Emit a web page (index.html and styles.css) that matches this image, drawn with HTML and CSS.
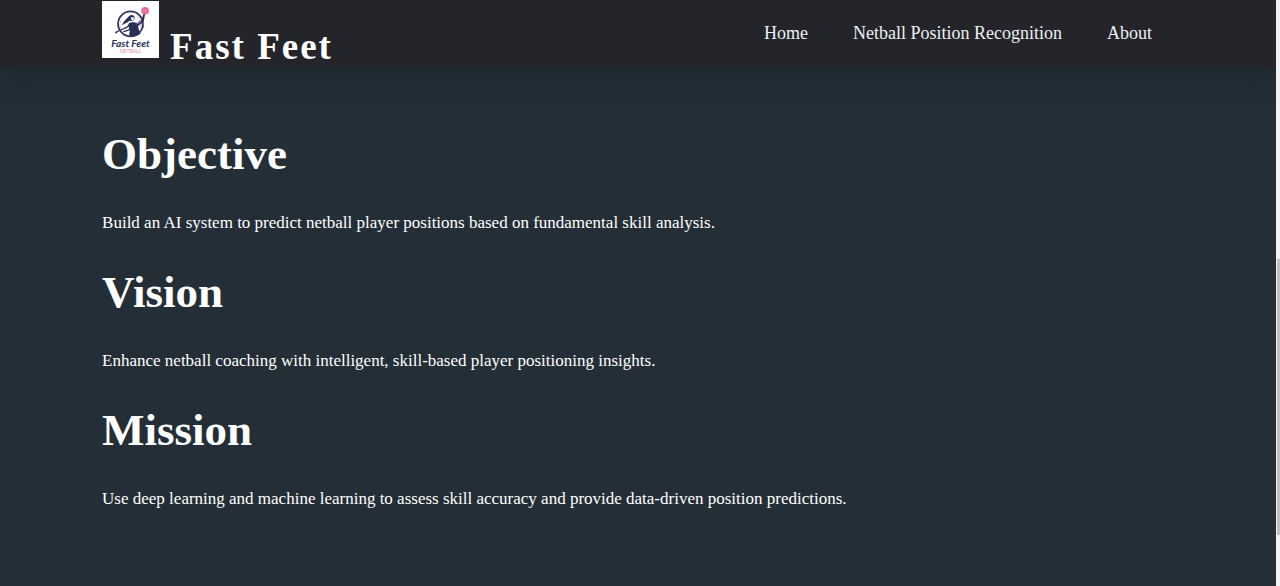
FILE: index.html
```html
<!DOCTYPE html>
<html lang="en">
<head>
<meta charset="utf-8">
<meta name="viewport" content="width=device-width, initial-scale=1">
<title>Fast Feet</title>
<link rel="stylesheet" href="styles.css">
</head>
<body>
<div class="page">
  <header class="header">
    <div class="brand">
      <svg class="brand-logo" viewBox="0 0 56 56" role="img" aria-label="Fast Feet Netball">
        <rect width="56" height="56" fill="#fff"/>
        <circle cx="28" cy="22.500" r="12.200" fill="#fff" stroke="#303460" stroke-width="1.700"/>
        <path d="M18.500 19a10.300 10.300 0 0 0 2 11M34 14.500a10.300 10.300 0 0 1 3.500 12" fill="none" stroke="#e9a9bf" stroke-width=".8"/>
        <path d="M26 15.500c2-2.500 5.500-2 6 .5.300 2-1 3.600-2.500 4l-2.500-.8c-1.500 2.300-4.500 2.800-7.500 4.800 1-3.500 4-6 6.500-8.500z" fill="#27305a"/>
        <path d="M26.500 21.500l4-.8 3.500.8 5-3.200 1.800-6 1.500.5-1.200 7-5.600 4.700c0 3 1.500 5 2.500 7.500-3.500 3-8 3.500-11.500 2l1-5.500c-1.500-2-2-4.500-1-7z" fill="#27305a"/>
        <path d="M27 22.500c-1 2.500-3.500 4-6.500 5l-6.500 3M21 30c2.500-.5 5-1 7.500-2.500" fill="none" stroke="#27305a" stroke-width="1.200"/>
        <path d="M28.500 16.500l2.300-.3.300 2-1.500 1zM34 22.500l4.500-2.500" fill="#fff" stroke="#fff" stroke-width=".6"/>
        <circle cx="14" cy="31" r="1" fill="#27305a"/>
        <path d="M39 22l2 4" stroke="#27305a" stroke-width=".8"/>
        <circle cx="42.300" cy="9.500" r="3.700" fill="#e5678f"/>
        <path d="M39.500 8l5.500 3M40.500 12l3.500-5.500" stroke="#f2a3ba" stroke-width=".5"/>
        <text class="logo-name" x="28" y="45" text-anchor="middle">Fast Feet</text>
        <text class="logo-sport" x="28" y="51" text-anchor="middle">NETBALL</text>
      </svg>
      <span class="brand-name">Fast Feet</span>
    </div>
    <nav class="nav">
      <a href="#home">Home</a>
      <a href="#recognition">Netball Position Recognition</a>
      <a href="#about">About</a>
    </nav>
  </header>
  <main class="content">
    <section class="topic">
      <h1>Objective</h1>
      <p>Build an AI system to predict netball player positions based on fundamental skill analysis.</p>
    </section>
    <section class="topic">
      <h1>Vision</h1>
      <p>Enhance netball coaching with intelligent, skill-based player positioning insights.</p>
    </section>
    <section class="topic">
      <h1>Mission</h1>
      <p>Use deep learning and machine learning to assess skill accuracy and provide data-driven position predictions.</p>
    </section>
  </main>
</div>
<div class="scrollbar" aria-hidden="true">
  <div class="scrollbar-thumb"></div>
</div>
</body>
</html>
```
FILE: styles.css
```css
* {
  box-sizing: border-box;
}

body {
  display: flex;
  min-height: 100vh;
  margin: 0;
  background: #242e36;
  color: #fff;
  font-family: "Liberation Serif", "Times New Roman", serif;
}

.page {
  flex: 1;
  min-width: 0;
}

.header {
  display: flex;
  justify-content: space-between;
  align-items: flex-start;
  min-height: 68px;
  padding: 1px 8% 0;
  background: #24252a;
  box-shadow: 0 8px 24px rgba(22, 38, 44, 0.6);
}

.brand {
  display: flex;
  align-items: flex-end;
  gap: 11px;
}

.brand-logo {
  width: 57px;
  height: 57px;
  margin-bottom: 9px;
}

.logo-name {
  fill: #27305a;
  font: italic bold 10px "Lato", sans-serif;
}

.logo-sport {
  fill: #e58aa8;
  font: 5px "Lato", sans-serif;
}

.brand-name {
  font-size: 37px;
  font-weight: bold;
  line-height: 40px;
  letter-spacing: 2px;
}

.nav {
  display: flex;
  flex-wrap: wrap;
  gap: 45px;
  padding: 20px 22px 0 0;
}

.nav a {
  color: #edf0f1;
  font-size: 18px;
  line-height: 24px;
  text-decoration: none;
}

.content {
  padding: 60px 8%;
}

.topic {
  margin-bottom: 30px;
}

.topic h1 {
  margin: 0 0 30px;
  font-size: 45px;
  line-height: 52px;
}

.topic p {
  margin: 0;
  font-size: 17px;
  line-height: 26px;
}

.scrollbar {
  display: flex;
  flex-direction: column;
  width: 4px;
  padding-top: 259px;
  background: #f1f1f1;
}

.scrollbar-thumb {
  height: 276px;
  margin-left: 1px;
  background: #c1c1c1;
}
```
